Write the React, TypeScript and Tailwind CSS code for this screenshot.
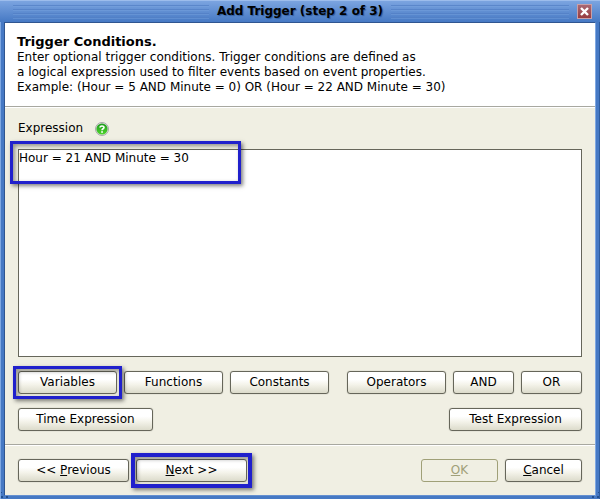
import type { ButtonHTMLAttributes, ReactNode } from "react"
import clsx from "clsx"

function Button({ className, disabled, children, ...rest }: ButtonHTMLAttributes<HTMLButtonElement>) {
  return (
    <button
      type="button"
      disabled={disabled}
      className={clsx(
        "h-[23px] shrink-0 rounded-[3px] border text-center leading-[15px]",
        disabled
          ? "border-[#a0a078] text-[#a0a078]"
          : "border-[#66665a] bg-linear-to-b from-white from-35% via-[#f4f3ea] via-60% to-[#dcdbcb] shadow-[0_0_1px_#8c8c80]",
        className
      )}
      {...rest}
    >
      {children}
    </button>
  )
}

// blue call-out frame that sits over a control
function Highlight({ className }: { className: string }) {
  return (
    <div
      className={clsx(
        "pointer-events-none absolute border-[#2020cc] shadow-[2px_2px_4px_rgba(0,0,0,0.5),inset_2px_2px_4px_rgba(0,0,0,0.4)]",
        className
      )}
    />
  )
}

function Grip() {
  return (
    <div className="flex h-[14px] flex-1 flex-col justify-between">
      {[0, 1, 2, 3].map((n) => (
        <div key={n} className="h-px bg-[#527fc4]/70 shadow-[0_1px_0_#7ba4e060]" />
      ))}
    </div>
  )
}

function TitleBar({ children }: { children: ReactNode }) {
  return (
    <header className="grid h-[22px] grid-cols-[1fr_auto_1fr] items-center border-t border-[#9dbdec] bg-linear-to-b from-[#7ba4e0] to-[#4679c4]">
      <div className="flex pl-[13px]">
        <Grip />
      </div>
      <h1 className="px-2 pb-px text-[12px] leading-4 font-bold [text-shadow:1px_1px_1px_#2f5c9e]">{children}</h1>
      <div className="flex items-center gap-2 pr-2">
        <Grip />
        <button
          type="button"
          aria-label="Close"
          className="flex size-[15px] items-center justify-center border border-[#c8a0a8] bg-linear-to-b from-[#a86874] to-[#983c40]"
        >
          <svg viewBox="0 0 9 9" className="size-[9px]" stroke="#fff" strokeWidth="2.4">
            <path d="M1 1l7 7M8 1L1 8" />
          </svg>
        </button>
      </div>
    </header>
  )
}

function HelpIcon() {
  return (
    <svg viewBox="0 0 14 14" className="block size-[14px]">
      <defs>
        <linearGradient id="help" x1="0" y1="0" x2="0" y2="1">
          <stop offset="0" stopColor="#1c9a1c" />
          <stop offset="1" stopColor="#4fd62c" />
        </linearGradient>
      </defs>
      <circle cx="7" cy="7" r="6.5" fill="#e4e4e4" stroke="#a8a8a8" />
      <circle cx="7" cy="7" r="5.6" fill="url(#help)" />
      <path d="M5 5.6C5 3.4 9 3.4 9 5.5C9 6.9 7 6.7 7 8.3" fill="none" stroke="#fff" strokeWidth="1.6" />
      <rect x="6.2" y="9.2" width="1.7" height="1.6" fill="#fff" />
    </svg>
  )
}

// dotted resize handle in the bottom corners of the window
function ResizeDots({ className }: { className: string }) {
  return (
    <svg viewBox="0 0 8 8" className={clsx("absolute bottom-0 size-2", className)} fill="#23508f">
      <path d="M1 1h1v1H1zM1 5h2v2H1zM6 5h2v2H6z" />
    </svg>
  )
}

export default function App() {
  return (
    <div className="relative flex min-h-screen flex-col bg-[#4679c4] font-['DejaVu_Sans',sans-serif] text-[12px] leading-[15px] text-black shadow-[inset_1px_0_0_#7fa8e2,inset_-1px_0_0_#2f5c9e]">
      <TitleBar>Add Trigger (step 2 of 3)</TitleBar>

      <main className="mx-1 mb-[3px] flex flex-1 flex-col border border-t-[#2f5590] border-r-[#7fa8e2] border-b-[#6590d0] border-l-[#2f5590] bg-[#f0efe3]">
        <section className="border-b border-[#a8a8a0] bg-white px-3 pt-[11px] pb-[11px]">
          <h2 className="text-[13px] leading-4 font-bold">Trigger Conditions.</h2>
          <p>
            Enter optional trigger conditions. Trigger conditions are defined as
            <br />
            a logical expression used to filter events based on event properties.
            <br />
            Example: (Hour = 5 AND Minute = 0) OR (Hour = 22 AND Minute = 30)
          </p>
        </section>

        <section className="flex flex-1 flex-col border-t border-white px-[13px] pt-[13px] pb-[13px]">
          <div className="flex items-center gap-3 pb-[13px]">
            <label htmlFor="expression">Expression</label>
            <button type="button" aria-label="Help">
              <HelpIcon />
            </button>
          </div>

          <div className="relative flex flex-1">
            <textarea
              id="expression"
              defaultValue="Hour = 21 AND Minute = 30"
              className="flex-1 resize-none border border-[#66665a] bg-white pt-px outline-none"
            />
            <Highlight className="-top-2 -left-2 h-[43px] w-[231px] border-3" />
          </div>

          <div className="mt-[14px] flex gap-[7px]">
            <div className="relative flex">
              <Button className="w-[99px]">Variables</Button>
              <Highlight className="-inset-[5px] border-3" />
            </div>
            <Button className="w-[99px]">Functions</Button>
            <Button className="w-[99px]">Constants</Button>
            <div className="flex-1" />
            <Button className="w-[99px]">Operators</Button>
            <Button className="w-[61px]">AND</Button>
            <Button className="w-[61px]">OR</Button>
          </div>

          <div className="mt-[14px] flex justify-between">
            <Button className="w-[135px]">Time Expression</Button>
            <Button className="w-[133px]">Test Expression</Button>
          </div>
        </section>

        <footer className="flex gap-[7px] border-t border-[#a8a8a0] px-[13px] pt-[14px] pb-[13px] shadow-[inset_0_1px_0_#fff]">
          <Button className="w-[111px]">
            &lt;&lt; <u>P</u>revious
          </Button>
          <div className="relative flex">
            <Button className="w-[111px]">
              <u>N</u>ext &gt;&gt;
            </Button>
            <Highlight className="-inset-x-[5px] -inset-y-1.5 border-4" />
          </div>
          <div className="flex-1" />
          <Button className="w-[77px]" disabled>
            <u>O</u>K
          </Button>
          <Button className="w-[77px]">
            <u>C</u>ancel
          </Button>
        </footer>
      </main>
      <ResizeDots className="left-0" />
      <ResizeDots className="right-0 -scale-x-100" />
    </div>
  )
}
